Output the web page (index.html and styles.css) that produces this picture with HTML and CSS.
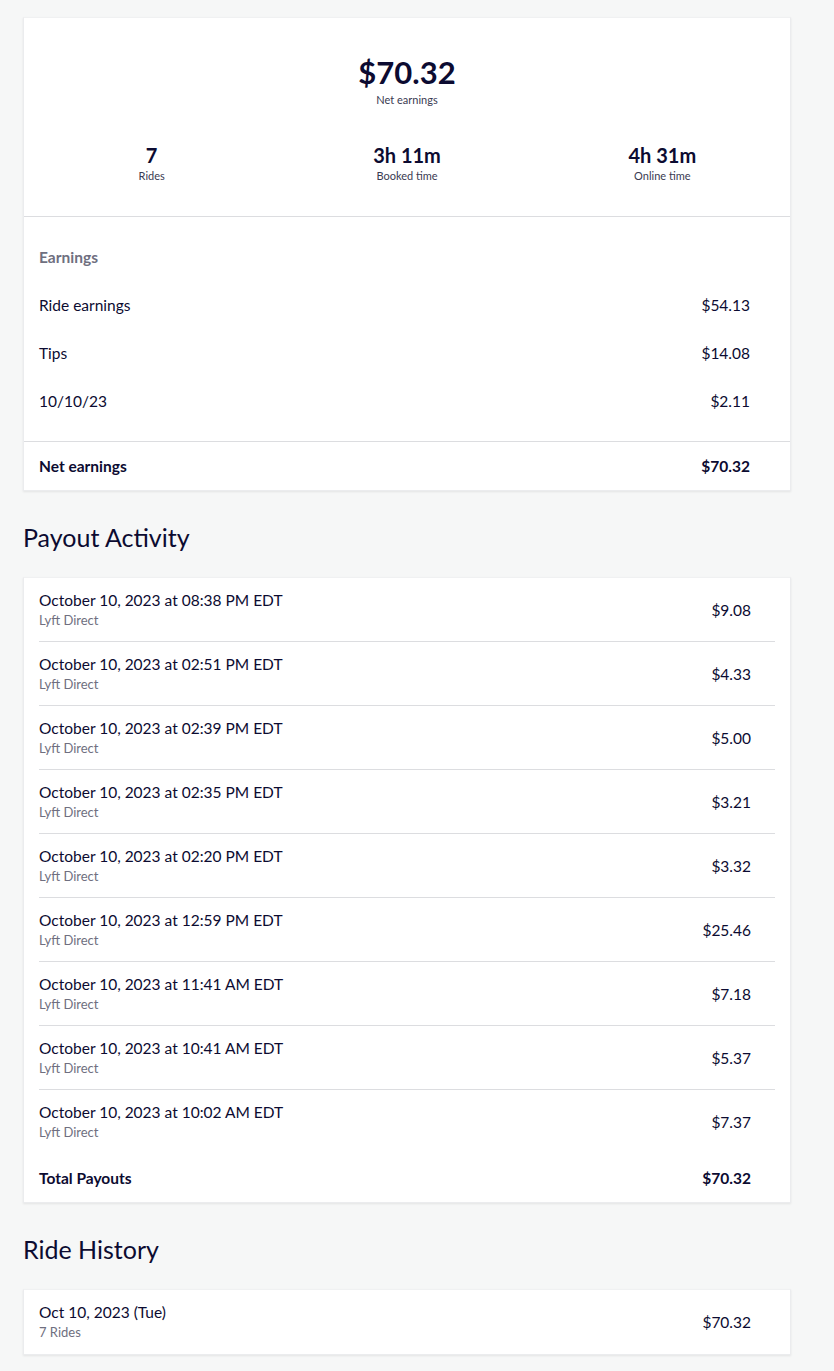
FILE: index.html
```html
<!DOCTYPE html>
<html>
<head>
<meta charset="utf-8">
<link rel="stylesheet" href="styles.css">
</head>
<body>
<main class="page">
  <section class="card summary-card">
    <div class="hero">
      <div class="hero-amount">$70.32</div>
      <div class="hero-label">Net earnings</div>
      <div class="stats">
        <div class="stat"><div class="stat-value">7</div><div class="stat-label">Rides</div></div>
        <div class="stat"><div class="stat-value">3h 11m</div><div class="stat-label">Booked time</div></div>
        <div class="stat"><div class="stat-value">4h 31m</div><div class="stat-label">Online time</div></div>
      </div>
    </div>
    <div class="earnings">
      <div class="line line-head">Earnings</div>
      <div class="line"><span>Ride earnings</span><span>$54.13</span></div>
      <div class="line"><span>Tips</span><span>$14.08</span></div>
      <div class="line"><span>10/10/23</span><span>$2.11</span></div>
    </div>
    <div class="line line-total"><span>Net earnings</span><span>$70.32</span></div>
  </section>

  <h2 class="section-title">Payout Activity</h2>
  <section class="card list-card">
    <div class="entry"><div><div class="entry-title">October 10, 2023 at 08:38 PM EDT</div><div class="entry-sub">Lyft Direct</div></div><div class="entry-amount">$9.08</div></div>
    <div class="entry"><div><div class="entry-title">October 10, 2023 at 02:51 PM EDT</div><div class="entry-sub">Lyft Direct</div></div><div class="entry-amount">$4.33</div></div>
    <div class="entry"><div><div class="entry-title">October 10, 2023 at 02:39 PM EDT</div><div class="entry-sub">Lyft Direct</div></div><div class="entry-amount">$5.00</div></div>
    <div class="entry"><div><div class="entry-title">October 10, 2023 at 02:35 PM EDT</div><div class="entry-sub">Lyft Direct</div></div><div class="entry-amount">$3.21</div></div>
    <div class="entry"><div><div class="entry-title">October 10, 2023 at 02:20 PM EDT</div><div class="entry-sub">Lyft Direct</div></div><div class="entry-amount">$3.32</div></div>
    <div class="entry"><div><div class="entry-title">October 10, 2023 at 12:59 PM EDT</div><div class="entry-sub">Lyft Direct</div></div><div class="entry-amount">$25.46</div></div>
    <div class="entry"><div><div class="entry-title">October 10, 2023 at 11:41 AM EDT</div><div class="entry-sub">Lyft Direct</div></div><div class="entry-amount">$7.18</div></div>
    <div class="entry"><div><div class="entry-title">October 10, 2023 at 10:41 AM EDT</div><div class="entry-sub">Lyft Direct</div></div><div class="entry-amount">$5.37</div></div>
    <div class="entry"><div><div class="entry-title">October 10, 2023 at 10:02 AM EDT</div><div class="entry-sub">Lyft Direct</div></div><div class="entry-amount">$7.37</div></div>
    <div class="line list-total"><span>Total Payouts</span><span>$70.32</span></div>
  </section>

  <h2 class="section-title">Ride History</h2>
  <section class="card list-card">
    <div class="entry"><div><div class="entry-title">Oct 10, 2023 (Tue)</div><div class="entry-sub">7 Rides</div></div><div class="entry-amount">$70.32</div></div>
  </section>
</main>
</body>
</html>
```
FILE: styles.css
```css
* { box-sizing: border-box; }
html, body { margin: 0; padding: 0; }
body {
  background: #f6f7f7;
  font-family: Lato, "Open Sans", sans-serif;
  color: #0c0b31;
}
.page {
  width: 768px;
  margin-left: 23px;
  padding-top: 17px;
  padding-bottom: 16px;
}
.card {
  background: #fff;
  border: 1px solid #ebecee;
  border-top-color: #f0f1f2;
  box-shadow: 0 1px 2px rgba(0, 0, 0, 0.08);
}
.hero {
  padding-top: 35px;
  padding-bottom: 32px;
  border-bottom: 1px solid #dcdde0;
  text-align: center;
}
.hero-amount {
  font-size: 31px;
  font-weight: 700;
  line-height: 38px;
}
.hero-label {
  margin-top: 1px;
}
.hero-label, .stat-label {
  font-size: 11px;
  line-height: 16px;
  color: #3a3a52;
}
.stat-label {
  margin-top: 1px;
}
.stats {
  display: grid;
  grid-template-columns: 1fr 1fr 1fr;
  margin-top: 35px;
}
.stat-value {
  font-size: 20px;
  font-weight: 700;
  line-height: 24px;
}
.earnings {
  padding: 16px 0 16px;
  border-bottom: 1px solid #dcdde0;
}
.line {
  display: flex;
  justify-content: space-between;
  align-items: center;
  height: 48px;
  padding: 0 40px 0 15px;
  font-size: 15.5px;
}
.line-head {
  font-weight: 700;
  color: #6f6f80;
}
.line-total {
  font-weight: 700;
}
.section-title {
  margin: 30px 0 24px;
  font-size: 25px;
  font-weight: 400;
  line-height: 32px;
}
.list-card {
  padding: 0 15px;
}
.entry {
  display: flex;
  justify-content: space-between;
  align-items: center;
  padding: 12px 24px 11px 0;
  border-bottom: 1px solid #dcdde0;
}
.list-card .entry:nth-last-child(2) { border-bottom: none; }
.list-card .entry:only-child { border-bottom: none; padding-bottom: 12px; }
.entry-title {
  font-size: 15.5px;
  line-height: 20px;
}
.entry-sub {
  font-size: 13px;
  line-height: 20px;
  color: #6f6f80;
}
.entry-amount {
  font-size: 15.5px;
}
.list-total {
  padding: 0 24px 0 0;
  height: 49px;
  font-weight: 700;
}
```
